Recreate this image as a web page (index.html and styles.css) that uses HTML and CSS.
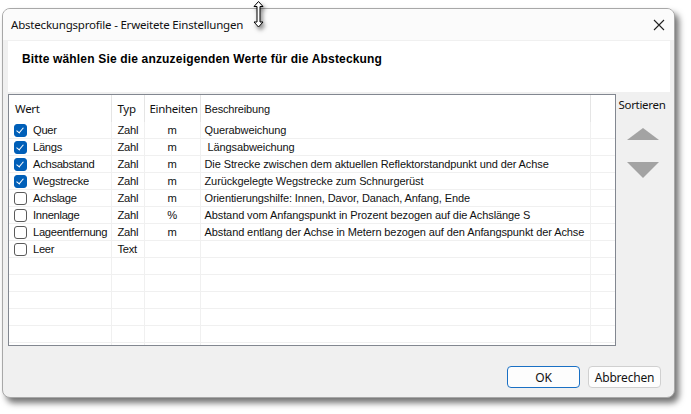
FILE: index.html
```html
<!DOCTYPE html>
<html>
<head>
<meta charset="utf-8">
<link rel="stylesheet" href="styles.css">
</head>
<body>
<div class="window">
  <div class="titlebar">
    <span class="title">Absteckungsprofile - Erweitete Einstellungen</span>
    <svg class="close" width="12" height="12" viewBox="0 0 12 12"><path d="M1 1L11 11M11 1L1 11" stroke="#222" stroke-width="1.1" fill="none"/></svg>
  </div>
  <div class="body">
    <div class="banner">Bitte wählen Sie die anzuzeigenden Werte für die Absteckung</div>
    <div class="main">
      <div class="grid">
        <table>
          <colgroup><col class="c1"><col class="c2"><col class="c3"><col class="c4"><col class="c5"></colgroup>
          <thead>
            <tr><th>Wert</th><th>Typ</th><th>Einheiten</th><th class="desc">Beschreibung</th><th></th></tr>
          </thead>
          <tbody>
            <tr><td><span class="cb on"></span>Quer</td><td>Zahl</td><td class="u">m</td><td class="desc">Querabweichung</td><td></td></tr>
            <tr><td><span class="cb on"></span>Längs</td><td>Zahl</td><td class="u">m</td><td class="desc">&nbsp;Längsabweichung</td><td></td></tr>
            <tr><td><span class="cb on"></span>Achsabstand</td><td>Zahl</td><td class="u">m</td><td class="desc">Die Strecke zwischen dem aktuellen Reflektorstandpunkt und der Achse</td><td></td></tr>
            <tr><td><span class="cb on"></span>Wegstrecke</td><td>Zahl</td><td class="u">m</td><td class="desc">Zurückgelegte Wegstrecke zum Schnurgerüst</td><td></td></tr>
            <tr><td><span class="cb"></span>Achslage</td><td>Zahl</td><td class="u">m</td><td class="desc">Orientierungshilfe: Innen, Davor, Danach, Anfang, Ende</td><td></td></tr>
            <tr><td><span class="cb"></span>Innenlage</td><td>Zahl</td><td class="u">%</td><td class="desc">Abstand vom Anfangspunkt in Prozent bezogen auf die Achslänge S</td><td></td></tr>
            <tr><td><span class="cb"></span>Lageentfernung</td><td>Zahl</td><td class="u">m</td><td class="desc">Abstand entlang der Achse in Metern bezogen auf den Anfangspunkt der Achse</td><td></td></tr>
            <tr><td><span class="cb"></span>Leer</td><td>Text</td><td class="u"></td><td class="desc"></td><td></td></tr>
            <tr><td></td><td></td><td></td><td></td><td></td></tr>
            <tr><td></td><td></td><td></td><td></td><td></td></tr>
            <tr><td></td><td></td><td></td><td></td><td></td></tr>
            <tr><td></td><td></td><td></td><td></td><td></td></tr>
            <tr><td></td><td></td><td></td><td></td><td></td></tr>
            <tr><td></td><td></td><td></td><td></td><td></td></tr>
          </tbody>
        </table>
      </div>
      <div class="side">
        <div class="sort-label">Sortieren</div>
        <svg class="arrow" width="32" height="12" viewBox="0 0 32 12"><path d="M16 0L32 12H0Z" fill="#a3a3a3"/></svg>
        <svg class="arrow down" width="32" height="16" viewBox="0 0 32 16"><path d="M0 0H32L16 16Z" fill="#a3a3a3"/></svg>
      </div>
    </div>
    <div class="footer">
      <button class="btn ok">OK</button>
      <button class="btn">Abbrechen</button>
    </div>
  </div>
</div>
<svg class="cursor" width="11" height="27" viewBox="0 0 11 27"><path d="M5.5 0.5L10 5.5H7V21H10L5.5 26L1 21H4V5.5H1Z" fill="#fff" stroke="#000" stroke-width="1"/></svg>
</body>
</html>
```
FILE: styles.css
```css
html, body {
  margin: 0;
  padding: 0;
  background: #ffffff;
  width: 691px;
  height: 414px;
  overflow: hidden;
  position: relative;
}
.window {
  margin: 8px 0 0 2px;
  width: 671px;
  height: 388px;
  border: 1px solid #a8a8a8;
  border-radius: 8px;
  background: #f0f0f0;
  box-shadow: 4px 5px 6px rgba(0, 0, 0, 0.55);
  display: flex;
  flex-direction: column;
  overflow: hidden;
  font-family: "Noto Sans", "Open Sans", sans-serif;
}
.titlebar {
  height: 31px;
  flex: none;
  background: #fbfbfb;
  display: flex;
  align-items: center;
  justify-content: space-between;
  padding: 0 7px 0 8px;
}
.title {
  font-size: 11.5px;
  color: #111;
  letter-spacing: -0.2px;
}
.close { margin-right: 2px; margin-top: 1px; }
.body {
  flex: 1;
  display: flex;
  flex-direction: column;
  padding: 1px 4px 0 5px;
}
.banner {
  background: #fff;
  height: 51px;
  padding: 11px 0 0 14px;
  box-sizing: border-box;
  font-family: "Liberation Sans", Arial, sans-serif;
  font-weight: bold;
  font-size: 12px;
  letter-spacing: 0.17px;
  color: #000;
}
.main {
  display: flex;
  margin-top: 2px;
}
.grid {
  width: 606px;
  height: 250px;
  border: 1px solid #828790;
  background: #fff;
  overflow: hidden;
}
table {
  border-collapse: collapse;
  table-layout: fixed;
  width: 606px;
}
col.c1 { width: 102px; }
col.c2 { width: 33px; }
col.c3 { width: 56px; }
col.c4 { width: 390px; }
col.c5 { width: 25px; }
th {
  height: 27px;
  padding: 0 0 0 6px;
  text-align: left;
  font-weight: normal;
  font-size: 11.5px;
  color: #111;
  border-right: 1px solid #e5e5e5;
  font-family: "Noto Sans", sans-serif;
  letter-spacing: -0.3px;
  vertical-align: middle;
}
th.desc {
  font-family: "Liberation Sans", Arial, sans-serif;
  font-size: 11px;
  letter-spacing: -0.15px;
  padding-left: 4px;
}
th:nth-child(3) { padding-left: 5px; }
td {
  height: 16px;
  padding: 0 0 0 6px;
  border-right: 1px solid #f0f0f0;
  border-bottom: 1px solid #f0f0f0;
  font-family: "Liberation Sans", Arial, sans-serif;
  font-size: 11.2px;
  color: #111;
  white-space: nowrap;
  overflow: hidden;
  letter-spacing: -0.3px;
  line-height: 16px;
}
td:first-child { padding-left: 5px; }
td.u { text-align: center; padding-left: 0; }
td.desc {
  font-size: 11px;
  letter-spacing: -0.1px;
  padding-left: 4px;
}
.cb {
  display: inline-block;
  width: 11px;
  height: 11px;
  border: 1px solid #5a5a5a;
  border-radius: 3px;
  vertical-align: -3px;
  margin-right: 6px;
  background: #fff;
  position: relative;
}
.cb.on {
  background: #005fb8;
  border-color: #005fb8;
}
.cb.on::after {
  content: "";
  position: absolute;
  left: 3px;
  top: 1px;
  width: 3px;
  height: 6px;
  border-right: 1.2px solid #fff;
  border-bottom: 1.2px solid #fff;
  transform: rotate(40deg);
}
.side {
  flex: 1;
  display: flex;
  flex-direction: column;
  align-items: center;
}
.sort-label {
  font-size: 11.5px;
  color: #111;
  margin-top: 3px;
  letter-spacing: -0.3px;
  margin-right: 2px;
}
.arrow { margin-top: 16px; margin-left: 0; }
.arrow.down { margin-top: 22px; }
.footer {
  flex: 1;
  display: flex;
  justify-content: flex-end;
  align-items: flex-start;
  gap: 8px;
  padding: 20px 9px 0 0;
}
.btn {
  width: 73px;
  height: 22px;
  background: #fdfdfd;
  border: 1px solid #d0d0d0;
  border-radius: 4px;
  font-family: "Noto Sans", sans-serif;
  font-size: 12px;
  color: #111;
  padding: 0;
  letter-spacing: -0.2px;
}
.btn.ok {
  border-color: #1a70c4;
}
.cursor {
  position: absolute;
  left: 253px;
  top: 1px;
  filter: drop-shadow(2px 3px 2px rgba(0,0,0,0.5));
}
```
